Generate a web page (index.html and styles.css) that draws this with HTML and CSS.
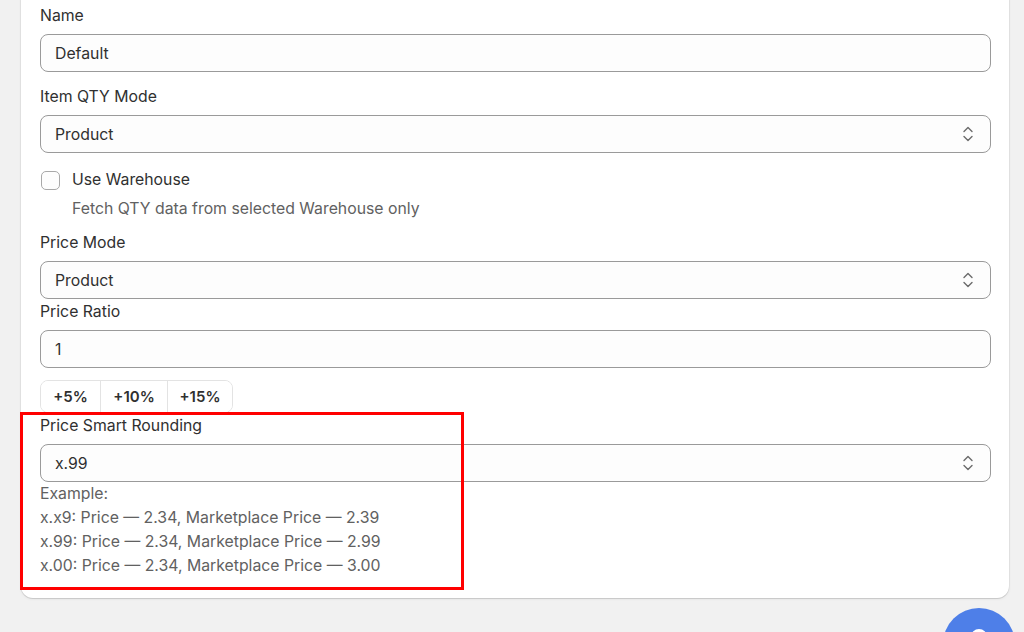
FILE: index.html
```html
<!DOCTYPE html>
<html lang="en">
<head>
<meta charset="utf-8">
<title>Settings</title>
<link rel="stylesheet" href="styles.css">
</head>
<body>
<main class="page">
  <section class="card">
    <div class="field">
      <label class="label">Name</label>
      <div class="input"><span>Default</span></div>
    </div>
    <div class="field">
      <label class="label">Item QTY Mode</label>
      <div class="input select"><span>Product</span>
        <svg class="chev" viewBox="0 0 12 20" width="12" height="20"><path d="M2 7.5 L6 3.5 L10 7.5 M2 12.5 L6 16.5 L10 12.5" fill="none" stroke="#6b6b6b" stroke-width="1.4" stroke-linecap="round" stroke-linejoin="round"/></svg>
      </div>
    </div>
    <div class="check-row">
      <span class="checkbox"></span>
      <span class="check-label">Use Warehouse</span>
    </div>
    <p class="help">Fetch QTY data from selected Warehouse only</p>
    <div class="field tight">
      <label class="label">Price Mode</label>
      <div class="input select"><span>Product</span>
        <svg class="chev" viewBox="0 0 12 20" width="12" height="20"><path d="M2 7.5 L6 3.5 L10 7.5 M2 12.5 L6 16.5 L10 12.5" fill="none" stroke="#6b6b6b" stroke-width="1.4" stroke-linecap="round" stroke-linejoin="round"/></svg>
      </div>
    </div>
    <div class="field ratio">
      <label class="label">Price Ratio</label>
      <div class="input"><span>1</span></div>
    </div>
    <div class="btn-group">
      <button class="btn b5">+5%</button>
      <button class="btn b10">+10%</button>
      <button class="btn b15">+15%</button>
    </div>
    <div class="highlight-wrap">
      <div class="field flush">
        <label class="label">Price Smart Rounding</label>
        <div class="input select"><span>x.99</span>
          <svg class="chev" viewBox="0 0 12 20" width="12" height="20"><path d="M2 7.5 L6 3.5 L10 7.5 M2 12.5 L6 16.5 L10 12.5" fill="none" stroke="#6b6b6b" stroke-width="1.4" stroke-linecap="round" stroke-linejoin="round"/></svg>
        </div>
      </div>
      <div class="examples">
        <div>Example:</div>
        <div>x.x9: Price — 2.34, Marketplace Price — 2.39</div>
        <div>x.99: Price — 2.34, Marketplace Price — 2.99</div>
        <div>x.00: Price — 2.34, Marketplace Price — 3.00</div>
      </div>
      <div class="highlight"></div>
    </div>
  </section>
  <div class="chat-btn"><span class="chat-dot"></span></div>
</main>
</body>
</html>
```
FILE: styles.css
```css
* { box-sizing: border-box; }
html, body { margin: 0; padding: 0; }
body {
  background: #f1f1f1;
  font-family: "Inter", "Liberation Sans", sans-serif;
  color: #303030;
  font-size: 15.8px;
  font-weight: 400;
  width: 1024px;
  height: 632px;
  overflow: hidden;
}
.page {
  position: relative;
  display: flow-root;
  height: 632px;
  overflow: hidden;
  padding: 0 15px 0 21px;
}
.card {
  background: #ffffff;
  width: 988px;
  margin-top: -12px;
  padding: 18px 18px 20px 19px;
  border-radius: 12px;
  box-shadow: 0 1px 0 rgba(0,0,0,0.08), 0 0 0 1px rgba(0,0,0,0.04), 0 1px 3px rgba(0,0,0,0.08);
}
.field { margin-bottom: 15px; }
.field.tight { margin-bottom: 3px; }
.field.ratio { margin-bottom: 12px; }
.field.flush { margin-bottom: 0; }
.label {
  display: block;
  line-height: 20px;
  margin-bottom: 8px;
  color: #303030;
}
.input {
  height: 38px;
  border: 1px solid #9a9a9a;
  border-radius: 8px;
  background: #fdfdfd;
  display: flex;
  align-items: center;
  justify-content: space-between;
  padding: 0 16px 0 14px;
  color: #303030;
}
.chev { display: block; }
.check-row {
  display: flex;
  align-items: center;
  margin-top: 17px;
  height: 20px;
}
.checkbox {
  width: 19px;
  height: 19px;
  border: 1px solid #a8a8a8;
  border-radius: 5px;
  background: #fdfdfd;
  margin-left: 1px;
  margin-right: 12px;
}
.check-label { line-height: 20px; }
.help {
  margin: 9px 0 14px 32px;
  line-height: 20px;
  color: #616161;
}
.btn-group {
  display: flex;
  width: max-content;
  border: 1px solid #e3e3e3;
  border-radius: 8px;
  background: #fff;
  height: 33px;
  overflow: hidden;
}
.btn {
  font-family: inherit;
  font-size: 15px;
  font-weight: 600;
  color: #303030;
  background: #fff;
  border: 0;
  padding: 0;
  height: 31px;
}
.btn + .btn { border-left: 1px solid #e3e3e3; }
.b5 { width: 59px; }
.b10 { width: 67px; }
.b15 { width: 65px; }
.highlight-wrap {
  position: relative;
  margin-top: 3px;
}
.examples {
  line-height: 24px;
  color: #616161;
}
.highlight {
  position: absolute;
  left: -20px;
  top: -4px;
  width: 444px;
  height: 178px;
  border: 3px solid #ff0000;
  pointer-events: none;
}
.chat-btn {
  position: absolute;
  left: 943px;
  top: 608px;
  width: 72px;
  height: 72px;
  border-radius: 50%;
  background: #4e7fe8;
}
.chat-dot {
  position: absolute;
  left: 28px;
  top: 21px;
  width: 16px;
  height: 16px;
  border-radius: 50%;
  background: #ffffff;
}
```
